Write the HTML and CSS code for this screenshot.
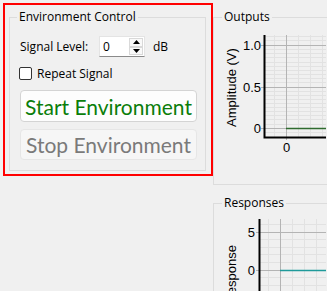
FILE: index.html
```html
<!DOCTYPE html>
<html lang="en">

<head>
    <meta charset="UTF-8">
    <meta name="viewport" content="width=device-width, initial-scale=1.0">
    <title>Environment Control</title>
    <link rel="stylesheet" href="styles.css">
</head>

<body>
    <div class="panel">
        <div class="group control">
            <div class="group-title">Environment Control</div>
            <div class="row">
                <span class="label">Signal Level:</span>
                <div class="spinbox">
                    <span class="value">0</span>
                    <div class="spin-buttons">
                        <div class="spin-btn">
                            <svg width="7" height="4" viewBox="0 0 7 4"><path d="M0 4 L3.5 0 L7 4 Z" fill="#000"/></svg>
                        </div>
                        <div class="spin-btn">
                            <svg width="7" height="4" viewBox="0 0 7 4"><path d="M0 0 L3.5 4 L7 0 Z" fill="#000"/></svg>
                        </div>
                    </div>
                </div>
                <span class="unit">dB</span>
            </div>
            <label class="check-row">
                <span class="checkbox"></span>
                <span>Repeat Signal</span>
            </label>
            <button type="button" class="big-btn start">Start Environment</button>
            <button type="button" class="big-btn stop" disabled>Stop Environment</button>
        </div>
    </div>

    <div class="side">
        <div class="group outputs">
            <div class="group-title">Outputs</div>
            <svg class="chart" width="113" height="159" viewBox="214 25 113 159">
                <g stroke="#e2e2e2" stroke-width="1">
                    <line x1="266" y1="36.5" x2="330" y2="36.5"/>
                    <line x1="266" y1="40.5" x2="330" y2="40.5"/>
                    <line x1="266" y1="49.5" x2="330" y2="49.5"/>
                    <line x1="266" y1="53.5" x2="330" y2="53.5"/>
                    <line x1="266" y1="57.5" x2="330" y2="57.5"/>
                    <line x1="266" y1="62.5" x2="330" y2="62.5"/>
                    <line x1="266" y1="66.5" x2="330" y2="66.5"/>
                    <line x1="266" y1="70.5" x2="330" y2="70.5"/>
                    <line x1="266" y1="74.5" x2="330" y2="74.5"/>
                    <line x1="266" y1="78.5" x2="330" y2="78.5"/>
                    <line x1="266" y1="82.5" x2="330" y2="82.5"/>
                    <line x1="266" y1="91.5" x2="330" y2="91.5"/>
                    <line x1="266" y1="95.5" x2="330" y2="95.5"/>
                    <line x1="266" y1="99.5" x2="330" y2="99.5"/>
                    <line x1="266" y1="103.5" x2="330" y2="103.5"/>
                    <line x1="266" y1="107.5" x2="330" y2="107.5"/>
                    <line x1="266" y1="111.5" x2="330" y2="111.5"/>
                    <line x1="266" y1="115.5" x2="330" y2="115.5"/>
                    <line x1="266" y1="119.5" x2="330" y2="119.5"/>
                    <line x1="266" y1="124.5" x2="330" y2="124.5"/>
                    <line x1="266" y1="132.5" x2="330" y2="132.5"/>
                    <line x1="275.5" y1="35" x2="275.5" y2="137"/>
                    <line x1="299.5" y1="35" x2="299.5" y2="137"/>
                    <line x1="311.5" y1="35" x2="311.5" y2="137"/>
                    <line x1="323.5" y1="35" x2="323.5" y2="137"/>
                </g>
                <g stroke="#b4b4b4" stroke-width="1">
                    <line x1="262" y1="45.5" x2="330" y2="45.5"/>
                    <line x1="262" y1="87.5" x2="330" y2="87.5"/>
                    <line x1="262" y1="128.5" x2="330" y2="128.5"/>
                    <line x1="287.5" y1="35" x2="287.5" y2="140"/>
                </g>
                <line x1="287" y1="128.5" x2="330" y2="128.5" stroke="#2f6b2f" stroke-width="1.5"/>
                <path d="M265.5 35 V137.5 H330" fill="none" stroke="#000" stroke-width="2"/>
                <g class="tick" text-anchor="end">
                    <text x="262" y="50">1.0</text>
                    <text x="262" y="92">0.5</text>
                    <text x="262" y="133">0</text>
                </g>
                <text class="tick" x="287.5" y="152" text-anchor="middle">0</text>
                <text class="tick" transform="translate(237 87.5) rotate(-90)" text-anchor="middle">Amplitude (V)</text>
            </svg>
        </div>

        <div class="group responses">
            <div class="group-title">Responses</div>
            <svg class="chart" width="113" height="80" viewBox="214 211 113 80">
                <g stroke="#e2e2e2" stroke-width="1">
                    <line x1="261" y1="224.5" x2="330" y2="224.5"/>
                    <line x1="261" y1="239.5" x2="330" y2="239.5"/>
                    <line x1="261" y1="247.5" x2="330" y2="247.5"/>
                    <line x1="261" y1="254.5" x2="330" y2="254.5"/>
                    <line x1="261" y1="262.5" x2="330" y2="262.5"/>
                    <line x1="261" y1="277.5" x2="330" y2="277.5"/>
                    <line x1="261" y1="285.5" x2="330" y2="285.5"/>
                    <line x1="269.5" y1="219" x2="269.5" y2="292"/>
                    <line x1="293.5" y1="219" x2="293.5" y2="292"/>
                    <line x1="305.5" y1="219" x2="305.5" y2="292"/>
                    <line x1="317.5" y1="219" x2="317.5" y2="292"/>
                </g>
                <g stroke="#b4b4b4" stroke-width="1">
                    <line x1="257" y1="232.5" x2="330" y2="232.5"/>
                    <line x1="257" y1="270.5" x2="330" y2="270.5"/>
                    <line x1="281.5" y1="219" x2="281.5" y2="292"/>
                </g>
                <line x1="281" y1="270.5" x2="330" y2="270.5" stroke="#1f9a9a" stroke-width="1.5"/>
                <line x1="260.5" y1="219" x2="260.5" y2="292" stroke="#000" stroke-width="2"/>
                <g class="tick" text-anchor="end">
                    <text x="256" y="237">5</text>
                    <text x="256" y="275">0</text>
                </g>
                <text class="tick" transform="translate(237 245) rotate(-90)" text-anchor="end">Response</text>
            </svg>
        </div>
    </div>
</body>

</html>
```

FILE: styles.css
```css
body {
    margin: 0;
    width: 327px;
    height: 291px;
    overflow: hidden;
    display: flex;
    align-items: flex-start;
    background-color: #f0f0f0;
    font-family: "Open Sans", "Noto Sans", sans-serif;
    font-size: 12px;
    color: #000;
}

.panel {
    flex: none;
    width: 210px;
    height: 173px;
    box-sizing: border-box;
    margin: 3px 0 0 3px;
    padding: 12px 5px 3px 4px;
    border: 2px solid #ff0000;
}

.group {
    box-sizing: border-box;
    border: 1px solid #dcdcdc;
}

.group-title {
    width: fit-content;
    margin: -9px 0 0 8px;
    padding: 0 2px;
    line-height: 16px;
    white-space: nowrap;
    background-color: #f0f0f0;
}

.control {
    height: 154px;
    padding: 0 8px 0 10px;
}

.control .group-title {
    margin-left: -3px;
}

.row {
    display: flex;
    align-items: center;
    margin-top: 11px;
    height: 21px;
}

.label {
    width: 79px;
}

.spinbox {
    display: flex;
    justify-content: space-between;
    width: 46px;
    height: 21px;
    box-sizing: border-box;
    padding: 1px 1px 1px 3px;
    background-color: #fff;
    border: 1px solid #e4e4e4;
    border-bottom-color: #8a8a8a;
}

.value {
    line-height: 18px;
}

.spin-buttons {
    display: flex;
    flex-direction: column;
    width: 14px;
}

.spin-btn {
    flex: 1;
    display: flex;
    align-items: center;
    justify-content: center;
    border: 1px solid #d9d9d9;
    background-color: #f9f9f9;
}

.unit {
    margin-left: 8px;
}

.check-row {
    display: flex;
    align-items: center;
    margin-top: 10px;
    height: 13px;
}

.checkbox {
    width: 13px;
    height: 13px;
    box-sizing: border-box;
    margin: 0 5px 0 -1px;
    border: 1px solid #333;
    border-radius: 2px;
    background-color: #fff;
}

.big-btn {
    display: block;
    width: 177px;
    padding: 0;
    font-family: Lato, "Open Sans", sans-serif;
    font-size: 21px;
    white-space: nowrap;
    border-radius: 4px;
}

.start {
    height: 32px;
    margin-top: 10px;
    color: #0a7d0a;
    background-color: #fdfdfd;
    border: 1px solid #d4d4d4;
}

.stop {
    height: 31px;
    margin-top: 7px;
    color: #7a7a7a;
    background-color: #f6f6f6;
    border: 1px solid #e6e6e6;
}

.side {
    flex: none;
    width: 114px;
    height: 291px;
    box-sizing: border-box;
    padding-top: 17px;
    overflow: hidden;
}

.outputs {
    width: 130px;
    height: 168px;
}

.responses {
    width: 130px;
    height: 120px;
    margin-top: 18px;
}

.chart {
    display: block;
    margin-left: -1px;
}

.tick {
    font-family: "Liberation Sans", Arial, sans-serif;
    font-size: 13px;
    fill: #000;
}
```
